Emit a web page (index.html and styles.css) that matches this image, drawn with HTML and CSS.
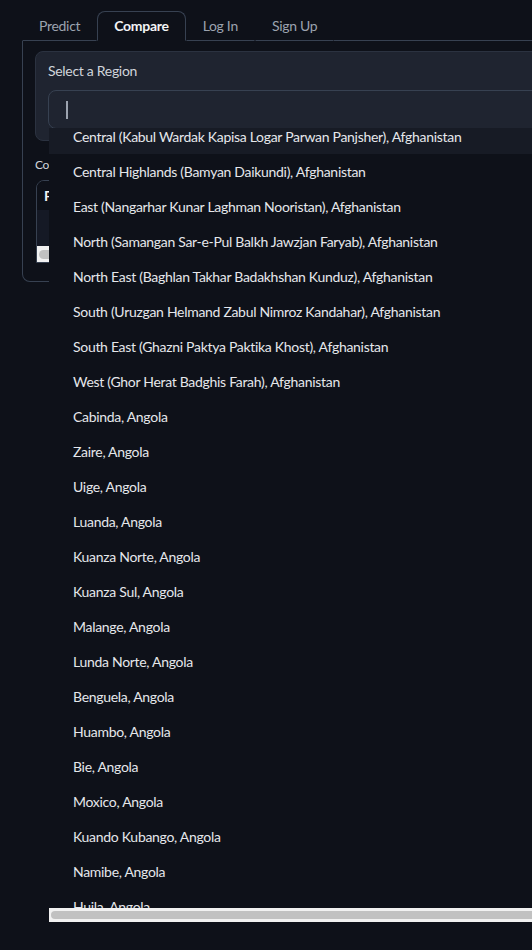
FILE: index.html
```html
<!DOCTYPE html>
<html>
<head>
<meta charset="utf-8">
<link rel="stylesheet" href="styles.css">
</head>
<body>
<div class="app">
  <div class="tabs">
    <div class="tab-nav">
      <button class="tab">Predict</button>
      <button class="tab selected">Compare</button>
      <button class="tab">Log In</button>
      <button class="tab">Sign Up</button>
      <div class="tab-fill"></div>
    </div>
    <div class="tab-panel">
      <div class="block region-block">
        <div class="label">Select a Region</div>
        <div class="input-wrap">
          <div class="input"><span class="caret"></span></div>
          <div class="dropdown">
            <ul class="options">
              <li class="active">Central (Kabul Wardak Kapisa Logar Parwan Panjsher), Afghanistan</li>
              <li>Central Highlands (Bamyan Daikundi), Afghanistan</li>
              <li>East (Nangarhar Kunar Laghman Nooristan), Afghanistan</li>
              <li>North (Samangan Sar-e-Pul Balkh Jawzjan Faryab), Afghanistan</li>
              <li>North East (Baghlan Takhar Badakhshan Kunduz), Afghanistan</li>
              <li>South (Uruzgan Helmand Zabul Nimroz Kandahar), Afghanistan</li>
              <li>South East (Ghazni Paktya Paktika Khost), Afghanistan</li>
              <li>West (Ghor Herat Badghis Farah), Afghanistan</li>
              <li>Cabinda, Angola</li>
              <li>Zaire, Angola</li>
              <li>Uige, Angola</li>
              <li>Luanda, Angola</li>
              <li>Kuanza Norte, Angola</li>
              <li>Kuanza Sul, Angola</li>
              <li>Malange, Angola</li>
              <li>Lunda Norte, Angola</li>
              <li>Benguela, Angola</li>
              <li>Huambo, Angola</li>
              <li>Bie, Angola</li>
              <li>Moxico, Angola</li>
              <li>Kuando Kubango, Angola</li>
              <li>Namibe, Angola</li>
              <li>Huila, Angola</li>
            </ul>
            <div class="hscroll"><div class="hthumb"></div></div>
          </div>
        </div>
      </div>
      <div class="compare-label">Comparison</div>
      <div class="table-box">
        <div class="table-head">F</div>
        <div class="table-body"></div>
        <div class="table-scroll"><div class="table-thumb"></div></div>
      </div>
    </div>
  </div>
</div>
</body>
</html>
```

FILE: styles.css
```css
* { box-sizing: border-box; }
html, body {
  margin: 0;
  padding: 0;
  background: #0e1119;
  overflow: hidden;
  width: 532px;
  height: 950px;
}
body {
  font-family: "Lato", "Noto Sans", sans-serif;
  color: #e5e7eb;
  letter-spacing: -0.3px;
}
.app {
  padding: 11px 0 0 22px;
  width: 900px;
}
.tab-nav {
  display: flex;
  align-items: flex-end;
  height: 30px;
}
.tab {
  background: none;
  border: 1px solid transparent;
  border-bottom: 1px solid #374151;
  font-family: inherit;
  letter-spacing: -0.3px;
  font-size: 14px;
  color: #9ca3af;
  padding: 0 16px;
  height: 30px;
  line-height: 28px;
  margin: 0;
  border-radius: 8px 8px 0 0;
}
.tab.selected {
  border-color: #374151;
  border-bottom-color: transparent;
  color: #f3f4f6;
  font-weight: 700;
}
.tab-fill {
  flex: 1;
  border-bottom: 1px solid #374151;
  height: 30px;
}
.tab-panel {
  border: 1px solid #374151;
  border-top: none;
  border-radius: 0 0 0 8px;
  padding: 10px 12px 18px 12px;
  height: 241px;
}
.block {
  background: #1f2430;
  border: 1px solid #2b3240;
  border-radius: 8px;
  padding: 10px 12px 11px 12px;
}
.label {
  font-size: 14px;
  color: #d1d5db;
  line-height: 18px;
  margin-bottom: 10px;
}
.input-wrap {
  position: relative;
}
.input {
  height: 39px;
  border: 1px solid #374151;
  border-radius: 8px;
  background: #1f2430;
  padding: 10px 17px;
}
.caret {
  display: block;
  width: 1.5px;
  height: 18px;
  background: #9ca3af;
}
.dropdown {
  position: absolute;
  left: 1px;
  top: 38px;
  width: 900px;
  height: 794px;
  background: #0e1119;
  overflow: hidden;
  z-index: 10;
}
.options {
  list-style: none;
  margin: -9px 0 0 0;
  padding: 0;
}
.options li {
  height: 35px;
  line-height: 35px;
  padding-left: 24px;
  font-size: 14px;
  color: #e5e7eb;
  white-space: nowrap;
}
.options li.active {
  background: #171b25;
}
.hscroll {
  position: absolute;
  left: 0;
  bottom: 0;
  width: 100%;
  height: 14px;
  background: #f1f1f1;
  padding: 3px 2px;
}
.hthumb {
  height: 8px;
  width: 100%;
  background: #c1c1c1;
  border-radius: 4px;
}
.compare-label {
  font-size: 12px;
  color: #d1d5db;
  margin: 17px 0 8px 0;
  line-height: 14px;
}
.table-box {
  border: 1px solid #374151;
  border-radius: 8px 8px 0 0;
  margin-left: 1px;
  overflow: hidden;
  height: 83px;
}
.table-head {
  font-weight: 700;
  font-size: 14px;
  color: #f3f4f6;
  padding: 8px 7px;
  height: 29px;
  line-height: 14px;
  background: #0e1119;
}
.table-body {
  height: 36px;
  background: #151925;
}
.table-scroll {
  height: 17px;
  background: #f1f1f1;
  padding: 4px 2px;
}
.table-thumb {
  height: 9px;
  background: #c1c1c1;
  border-radius: 5px;
}
```
